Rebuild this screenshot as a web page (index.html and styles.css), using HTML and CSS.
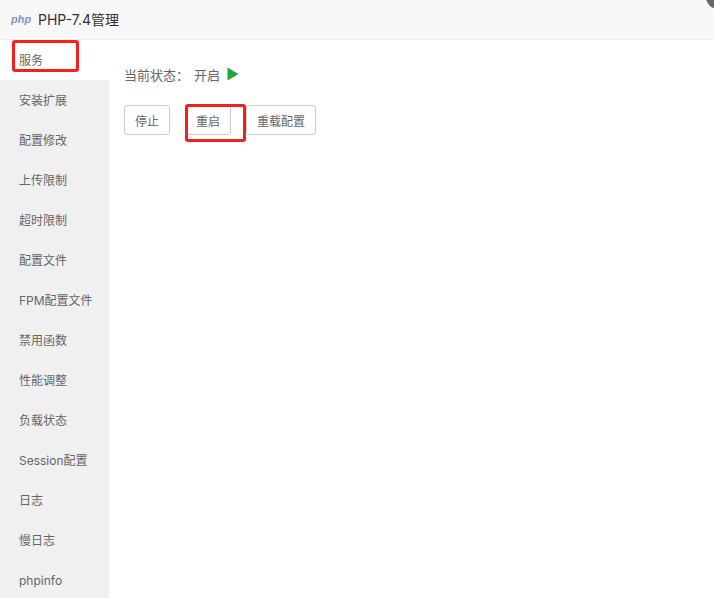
FILE: index.html
```html
<!DOCTYPE html>
<html lang="zh">
<head>
<meta charset="utf-8">
<title>PHP-7.4管理</title>
<link rel="stylesheet" href="styles.css">
</head>
<body>
<div class="dialog">
  <header class="title-bar">
    <svg class="logo" width="21" height="12" viewBox="0 0 21 12"><text x="0" y="9.500" class="logo-text">php</text></svg>
    <span class="title">PHP-7.4管理</span>
  </header>
  <div class="body">
    <nav class="side">
      <div class="item active">服务</div>
      <div class="item">安装扩展</div>
      <div class="item">配置修改</div>
      <div class="item">上传限制</div>
      <div class="item">超时限制</div>
      <div class="item">配置文件</div>
      <div class="item">FPM配置文件</div>
      <div class="item">禁用函数</div>
      <div class="item">性能调整</div>
      <div class="item">负载状态</div>
      <div class="item">Session配置</div>
      <div class="item">日志</div>
      <div class="item">慢日志</div>
      <div class="item">phpinfo</div>
    </nav>
    <main class="content">
      <div class="status">
        <span class="label">当前状态&#xFF1A;</span><span class="state">开启</span>
        <svg class="play" width="12" height="14" viewBox="0 0 12 14"><path d="M0.500 0.500 L11.500 7 L0.500 13.500 Z" fill="#20a53a"/></svg>
      </div>
      <div class="actions">
        <button class="btn">停止</button>
        <button class="btn">重启</button>
        <button class="btn wide">重载配置</button>
      </div>
    </main>
  </div>
  <div class="close"></div>
  <div class="mark mark-one"></div>
  <div class="mark mark-two"></div>
</div>
</body>
</html>
```
FILE: styles.css
```css
* { box-sizing: border-box; }
html, body { margin: 0; height: 100%; overflow: hidden; background: #fff; }
body { font-family: "Noto Sans CJK SC", "Open Sans", sans-serif; color: #666; }
.dialog { position: relative; width: 714px; height: 598px; overflow: hidden; }
.title-bar { height: 40px; display: flex; align-items: center; padding: 0 0 2px 11px; background: #f8f8f8; border-bottom: 1px solid #eee; }
.logo { margin-right: 6px; }
.logo-text { font-family: "Liberation Sans", sans-serif; font-size: 11px; font-weight: 700; font-style: italic; fill: #7f93c0; }
.title { font-size: 14px; color: #333; font-family: "Inter", "Noto Sans CJK SC", sans-serif; }
.body { display: flex; height: 558px; }
.side { width: 109px; flex: none; background: #f0f0f0; }
.item { height: 40px; line-height: 41px; padding-left: 19px; font-size: 12px; color: #666; font-family: "Inter", "Noto Sans CJK SC", sans-serif; white-space: nowrap; }
.item.active { background: #fff; }
.content { flex: 1; padding: 24px 15px; }
.status { display: flex; align-items: center; height: 20px; font-size: 13px; color: #666; }
.label { width: 66px; }
.state { margin-left: 4px; }
.play { margin-left: 7px; }
.actions { display: flex; gap: 15px; margin-top: 21px; }
.btn { width: 46px; height: 30px; padding: 0; background: #fff; border: 1px solid #ccc; border-radius: 3px; font: inherit; font-size: 12px; color: #666; }
.btn.wide { width: 70px; }
.close { position: absolute; top: -17px; left: 704px; width: 28px; height: 28px; border-radius: 50%; background: #666; border: 2px solid #fff; }
.mark { position: absolute; border: 3px solid #f5201c; border-radius: 3px; }
.mark-one { left: 12px; top: 40px; width: 67px; height: 32px; }
.mark-two { left: 185px; top: 104px; width: 61px; height: 38px; }
```
